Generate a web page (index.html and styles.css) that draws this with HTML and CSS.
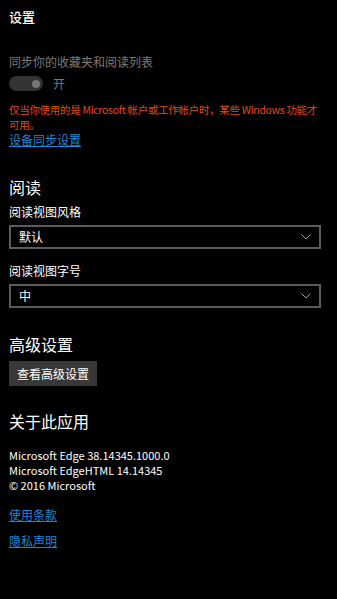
FILE: index.html
```html
<!DOCTYPE html>
<html>

    <head>
        <meta charset="utf-8">
        <title>设置</title>
        <meta name="viewport" content="width=device-width, initial-scale=1">

        <link rel="stylesheet" href="styles.css">

    </head>

    <body>
        <div class="panel">
            <div class="page-title">设置</div>

            <div class="field-label disabled sync-label">同步你的收藏夹和阅读列表</div>
            <div class="toggle-row">
                <span class="toggle"><span class="toggle-knob"></span></span>
                <span class="toggle-text">开</span>
            </div>
            <p class="warning">仅当你使用的是 Microsoft 帐户或工作帐户时，某些 Windows 功能才可用。</p>
            <a class="link" href="#">设备同步设置</a>

            <h2 class="section-title first">阅读</h2>
            <div class="field-label">阅读视图风格</div>
            <div class="select">
                <span>默认</span>
                <svg class="chevron" width="10" height="6" viewBox="0 0 10 6">
                    <polyline points="0.5,0.5 5,5 9.5,0.5" fill="none" stroke="#a0a0a0" stroke-width="1"/>
                </svg>
            </div>
            <div class="field-label second">阅读视图字号</div>
            <div class="select">
                <span>中</span>
                <svg class="chevron" width="10" height="6" viewBox="0 0 10 6">
                    <polyline points="0.5,0.5 5,5 9.5,0.5" fill="none" stroke="#a0a0a0" stroke-width="1"/>
                </svg>
            </div>

            <h2 class="section-title">高级设置</h2>
            <button class="plain-btn">查看高级设置</button>

            <h2 class="section-title about">关于此应用</h2>
            <div class="about-info">
                <div>Microsoft Edge 38.14345.1000.0</div>
                <div>Microsoft EdgeHTML 14.14345</div>
                <div>© 2016 Microsoft</div>
            </div>

            <div class="links">
                <a class="link" href="#">使用条款</a>
                <a class="link" href="#">隐私声明</a>
            </div>
        </div>
    </body>

</html>
```

FILE: styles.css
```css
* {
    font-family: 'Noto Sans CJK SC', 'Open Sans', sans-serif;
    box-sizing: border-box;
}
body {
    background-color: #000000;
    color: #ffffff;
    margin: 0px;
    padding: 0px;
}

.panel{
    display: flex;
    flex-direction: column;
    align-items: flex-start;
    padding: 7px 16px 0px 9px;
}

.page-title{
    font-size: 13px;
    line-height: 20px;
    font-weight: 500;
}

.field-label{
    font-size: 12px;
    line-height: 16px;
    margin-top: 6px;
}

.field-label.second{
    margin-top: 14px;
}

.disabled{
    color: #7a7a7a;
}

.sync-label{
    margin-top: 27px;
}

.toggle-row{
    display: flex;
    align-items: center;
    margin-top: 6px;
    height: 15px;
}

.toggle{
    display: flex;
    align-items: center;
    justify-content: flex-end;
    width: 34px;
    height: 15px;
    border-radius: 8px;
    background-color: #333333;
    padding-right: 3px;
}

.toggle-knob{
    width: 8px;
    height: 8px;
    border-radius: 50%;
    background-color: #767676;
}

.toggle-text{
    color: #7a7a7a;
    font-size: 12px;
    margin-left: 10px;
}

.warning{
    color: #e24a12;
    font-size: 10.5px;
    line-height: 15px;
    letter-spacing: -0.3px;
    margin: 11px 0px 0px 0px;
}

.link{
    color: #1a86d8;
    font-size: 12px;
    line-height: 16px;
    text-decoration: underline;
}

.section-title{
    font-size: 16px;
    font-weight: normal;
    line-height: 22px;
    margin: 25.5px 0px 0px 0px;
}

.section-title.first{
    margin-top: 27.5px;
}

.section-title.about{
    margin-top: 24px;
}

.select{
    display: flex;
    align-items: center;
    justify-content: space-between;
    width: 100%;
    height: 24px;
    margin-top: 5px;
    border: 2px solid #5c5c5c;
    padding: 0px 8px 0px 8px;
    font-size: 12px;
}

.plain-btn{
    margin-top: 5.5px;
    height: 25px;
    padding: 0px 8px;
    border: none;
    background-color: #383838;
    color: #ffffff;
    font-size: 12px;
}

.about-info{
    margin-top: 16px;
    font-family: 'Open Sans', sans-serif;
    font-size: 11px;
    line-height: 15px;
}

.links{
    display: flex;
    flex-direction: column;
    align-items: flex-start;
    gap: 10px;
    margin-top: 14px;
}
```
